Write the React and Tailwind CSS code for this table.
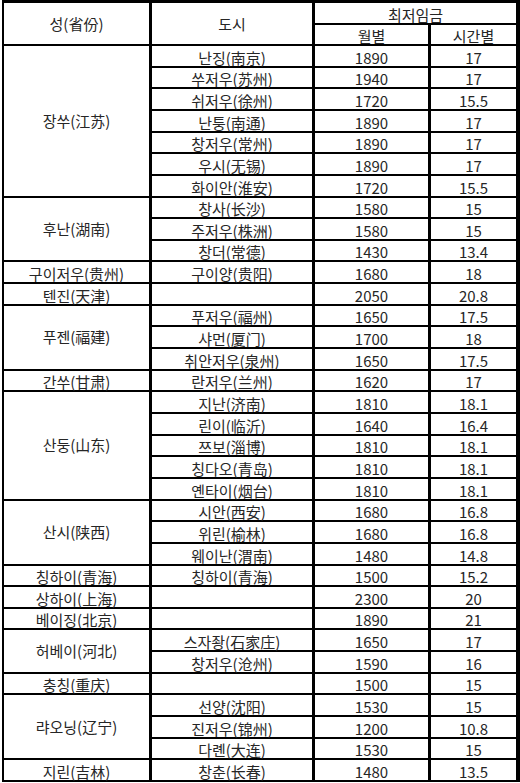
import React from "react";

const groups = [
  ["장쑤(江苏)", [["난징(南京)", "1890", "17"], ["쑤저우(苏州)", "1940", "17"], ["쉬저우(徐州)", "1720", "15.5"], ["난퉁(南通)", "1890", "17"], ["창저우(常州)", "1890", "17"], ["우시(无锡)", "1890", "17"], ["화이안(淮安)", "1720", "15.5"]]],
  ["후난(湖南)", [["창사(长沙)", "1580", "15"], ["주저우(株洲)", "1580", "15"], ["창더(常德)", "1430", "13.4"]]],
  ["구이저우(贵州)", [["구이양(贵阳)", "1680", "18"]]],
  ["텐진(天津)", [["", "2050", "20.8"]]],
  ["푸젠(福建)", [["푸저우(福州)", "1650", "17.5"], ["샤먼(厦门)", "1700", "18"], ["취안저우(泉州)", "1650", "17.5"]]],
  ["간쑤(甘肃)", [["란저우(兰州)", "1620", "17"]]],
  ["산둥(山东)", [["지난(济南)", "1810", "18.1"], ["린이(临沂)", "1640", "16.4"], ["쯔보(淄博)", "1810", "18.1"], ["칭다오(青岛)", "1810", "18.1"], ["옌타이(烟台)", "1810", "18.1"]]],
  ["산시(陕西)", [["시안(西安)", "1680", "16.8"], ["위린(榆林)", "1680", "16.8"], ["웨이난(渭南)", "1480", "14.8"]]],
  ["칭하이(青海)", [["칭하이(青海)", "1500", "15.2"]]],
  ["상하이(上海)", [["", "2300", "20"]]],
  ["베이징(北京)", [["", "1890", "21"]]],
  ["허베이(河北)", [["스자좡(石家庄)", "1650", "17"], ["창저우(沧州)", "1590", "16"]]],
  ["충칭(重庆)", [["", "1500", "15"]]],
  ["랴오닝(辽宁)", [["선양(沈阳)", "1530", "15"], ["진저우(锦州)", "1200", "10.8"], ["다롄(大连)", "1530", "15"]]],
  ["지린(吉林)", [["창춘(长春)", "1480", "13.5"]]],
];

const font = { fontFamily: '"Noto Sans CJK KR", "Noto Sans CJK SC", sans-serif' };

function Cell({ children, span = 1 }) {
  return (
    <div
      className={`bg-white flex justify-center text-[15px] leading-[16px] text-[#262626] whitespace-nowrap ${span > 1 ? "items-center" : "items-end"}`}
      style={span > 1 ? { gridRow: `span ${span} / span ${span}` } : undefined}
    >
      <span>{children}</span>
    </div>
  );
}

export default function App() {
  return (
    <div className="w-[520px] h-[783px] bg-white" style={font}>
      <div className="ml-[2px] w-[518px] h-[782px] bg-black pt-[3px] pl-[2px] pr-[4px] pb-[2px] grid grid-cols-[145px_160px_113px_85px] grid-rows-[20px_19px_repeat(34,minmax(0,1fr))] gap-x-[3px] gap-y-[2px]">
        <div className="row-span-2 bg-white flex items-center justify-center text-[15px] leading-[16px] text-[#262626]">
          <span>성(省份)</span>
        </div>
        <div className="row-span-2 bg-white flex items-center justify-center text-[15px] leading-[16px] text-[#262626]">
          <span>도시</span>
        </div>
        <div className="col-span-2 bg-white flex items-end justify-center text-[15px] leading-[16px] text-[#262626]">
          <span>최저임금</span>
        </div>
        <Cell>월별</Cell>
        <Cell>시간별</Cell>
        {groups.map(([prov, rows]) => (
          <React.Fragment key={prov}>
            <Cell span={rows.length}>{prov}</Cell>
            {rows.map(([city, m, h], i) => (
              <React.Fragment key={i}>
                <Cell>{city}</Cell>
                <Cell>{m}</Cell>
                <Cell>{h}</Cell>
              </React.Fragment>
            ))}
          </React.Fragment>
        ))}
      </div>
    </div>
  );
}
